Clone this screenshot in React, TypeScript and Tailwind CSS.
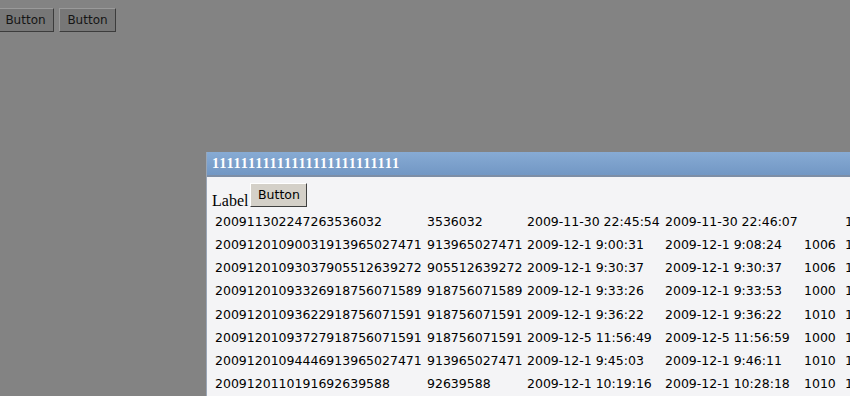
import React from "react";

const rows: string[][] = [
  ["200911302247263536032", "3536032", "2009-11-30 22:45:54", "2009-11-30 22:46:07", "", "1"],
  ["200912010900319139650274" + "71", "913965027471", "2009-12-1 9:00:31", "2009-12-1 9:08:24", "1006", "1"],
  ["200912010930379055126392" + "72", "905512639272", "2009-12-1 9:30:37", "2009-12-1 9:30:37", "1006", "1"],
  ["200912010933269187560715" + "89", "918756071589", "2009-12-1 9:33:26", "2009-12-1 9:33:53", "1000", "1"],
  ["200912010936229187560715" + "91", "918756071591", "2009-12-1 9:36:22", "2009-12-1 9:36:22", "1010", "1"],
  ["200912010937279187560715" + "91", "918756071591", "2009-12-5 11:56:49", "2009-12-5 11:56:59", "1000", "1"],
  ["200912010944469139650274" + "71", "913965027471", "2009-12-1 9:45:03", "2009-12-1 9:46:11", "1010", "1"],
  ["2009120110191692639588", "92639588", "2009-12-1 10:19:16", "2009-12-1 10:28:18", "1010", "1"],
];

export default function App() {
  return (
    <div className="relative w-[850px] h-[396px] overflow-hidden bg-[#838383]">
      <div className="flex gap-[5px] pt-[8px] ml-[-3px]">
        <button className="h-[24px] w-[57px] bg-[#777777] border border-t-[#9a9a9a] border-l-[#9a9a9a] border-r-[#3c3c3c] border-b-[#3c3c3c] text-[#151515] text-[12px] [font-family:'DejaVu_Sans',sans-serif] flex items-center justify-center">
          Button
        </button>
        <button className="h-[24px] w-[57px] bg-[#777777] border border-t-[#9a9a9a] border-l-[#9a9a9a] border-r-[#3c3c3c] border-b-[#3c3c3c] text-[#151515] text-[12px] [font-family:'DejaVu_Sans',sans-serif] flex items-center justify-center">
          Button
        </button>
      </div>

      <div className="absolute left-[206px] top-[152px] w-[700px] h-[300px] border-l border-[#9aa6b6] bg-[#f4f4f6]">
        <div className="h-[25px] bg-gradient-to-b from-[#87abd4] to-[#7297c4] border-b-2 border-[#7d8ea6] flex items-center pl-[5px]">
          <span className="text-white font-bold text-[14.4px] [font-family:'Liberation_Serif',serif] tracking-[0.8px]">
            11111111111111111111111111
          </span>
        </div>
        <div className="pl-[5px] pt-[6px]">
          <div className="flex items-end h-[24px]">
            <span className="text-[16px] text-black [font-family:'Liberation_Serif',serif] leading-none mb-[-2px]">Label</span>
            <button className="ml-[2px] h-[24px] w-[57px] bg-[#d4d0c8] border border-t-[#ffffff] border-l-[#ffffff] border-r-[#404040] border-b-[#404040] text-black text-[12.5px] [font-family:'DejaVu_Sans',sans-serif] flex items-center justify-center">
              Button
            </button>
          </div>
          <div className="pl-[3px] pt-[4px] text-[12.5px] text-black [font-family:'DejaVu_Sans',sans-serif]">
            {rows.map((r, i) => (
              <div key={i} className="grid grid-cols-[212px_100px_138px_139px_41px_40px] h-[23.1px] items-center whitespace-nowrap">
                {r.map((c, j) => (
                  <span key={j}>{c}</span>
                ))}
              </div>
            ))}
          </div>
        </div>
      </div>
    </div>
  );
}
